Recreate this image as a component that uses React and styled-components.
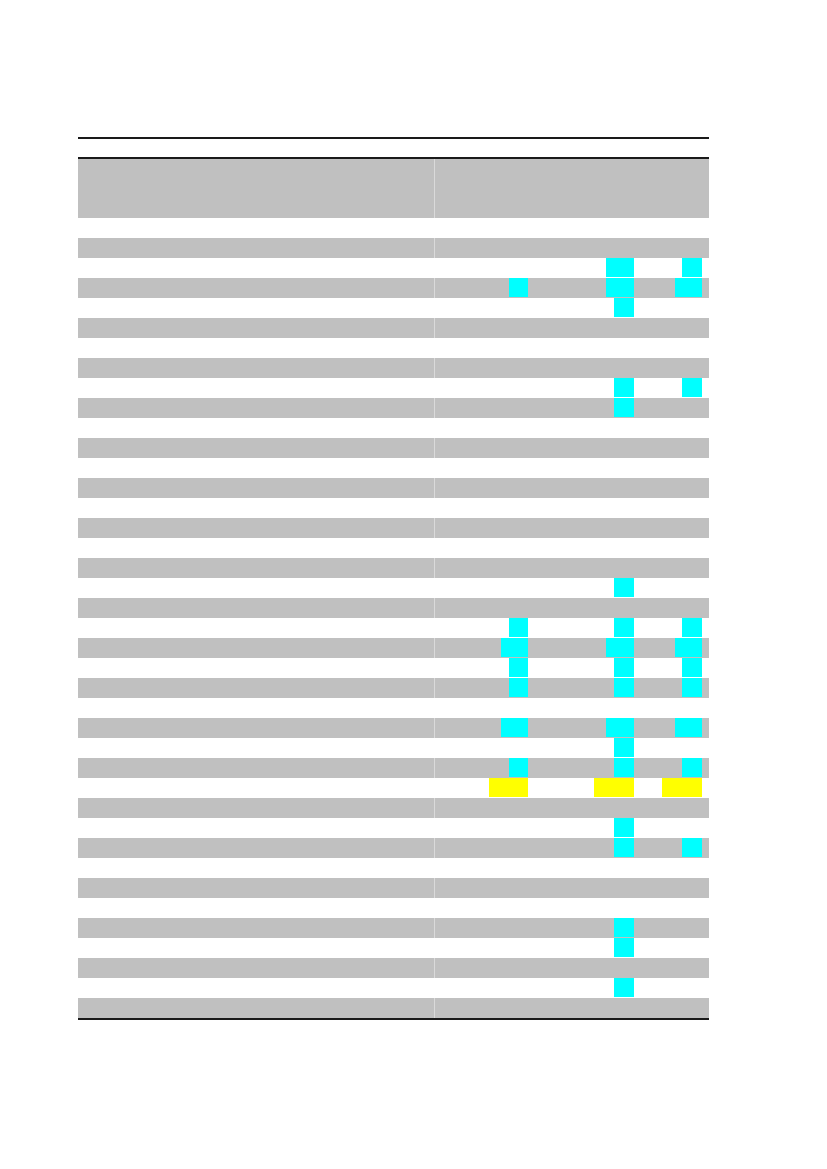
import React from "react";
import styled, { createGlobalStyle } from "styled-components";

const Global = createGlobalStyle`
  html, body { margin: 0; padding: 0; background: #fff; }
  body { font-family: "Liberation Sans", Arial, sans-serif; }
`;

const COLS = "96px 89px 106px 65px 16px 87px 105px 67px";

const Page = styled.div`
  padding: 137px 0 0 78px;
  width: 827px;
  height: 1169px;
  box-sizing: border-box;
`;

const Table = styled.div`
  width: 631px;
  border-top: 2px solid #1a1a1a;
  border-bottom: 2px solid #1a1a1a;
`;

const Spacer = styled.div`
  height: 18px;
`;

const Row = styled.div`
  display: grid;
  grid-template-columns: ${COLS};
  height: ${(p) => p.$h || 20}px;
  background: ${(p) => (p.$gray ? "#c0c0c0" : "#ffffff")};
  border-top: ${(p) => (p.$rule ? "2px solid #1a1a1a" : "none")};
`;

const Cell = styled.div`
  display: flex;
  justify-content: flex-end;
  align-items: flex-start;
  padding-right: ${(p) => p.$pad || 0}px;
  border-left: ${(p) => (p.$sep ? `1px solid ${p.$gray ? "#dadada" : "#ffffff"}` : "none")};
  box-sizing: border-box;
`;

const Mark = styled.span`
  display: block;
  height: 19px;
  width: ${(p) => p.$w}px;
  background: ${(p) => (p.$kind === "y" ? "#ffff00" : "#00ffff")};
`;

const WIDTHS = [
  { n: 19, w: 27, y: 39 },
  { n: 20, w: 28, y: 40 },
  { n: 20, w: 27, y: 40 },
];
const PADS = [9, 8, 7];

const MARKS = {
  2: [null, "w", "n"],
  3: ["n", "w", "w"],
  4: [null, "n", null],
  8: [null, "n", "n"],
  9: [null, "n", null],
  18: [null, "n", null],
  20: ["n", "n", "n"],
  21: ["w", "w", "w"],
  22: ["n", "n", "n"],
  23: ["n", "n", "n"],
  25: ["w", "w", "w"],
  26: [null, "n", null],
  27: ["n", "n", "n"],
  28: ["y", "y", "y"],
  30: [null, "n", null],
  31: [null, "n", "n"],
  35: [null, "n", null],
  36: [null, "n", null],
  38: [null, "n", null],
};

function DataRow({ marks, gray, h, rule }) {
  return (
    <Row $gray={gray} $h={h} $rule={rule}>
      <Cell />
      <Cell />
      <Cell />
      <Cell />
      <Cell $sep $gray={gray} />
      {[0, 1, 2].map((c) => {
        const k = marks ? marks[c] : null;
        return (
          <Cell key={c} $pad={PADS[c]}>
            {k && <Mark $kind={k} $w={WIDTHS[c][k]} />}
          </Cell>
        );
      })}
    </Row>
  );
}

export default function App() {
  const rows = Array.from({ length: 40 }, (_, i) => i);
  return (
    <Page>
      <Global />
      <Table>
        <Spacer />
        <DataRow gray h={59} rule />
        {rows.map((i) => (
          <DataRow key={i} gray={i % 2 === 1} marks={MARKS[i]} />
        ))}
      </Table>
    </Page>
  );
}
